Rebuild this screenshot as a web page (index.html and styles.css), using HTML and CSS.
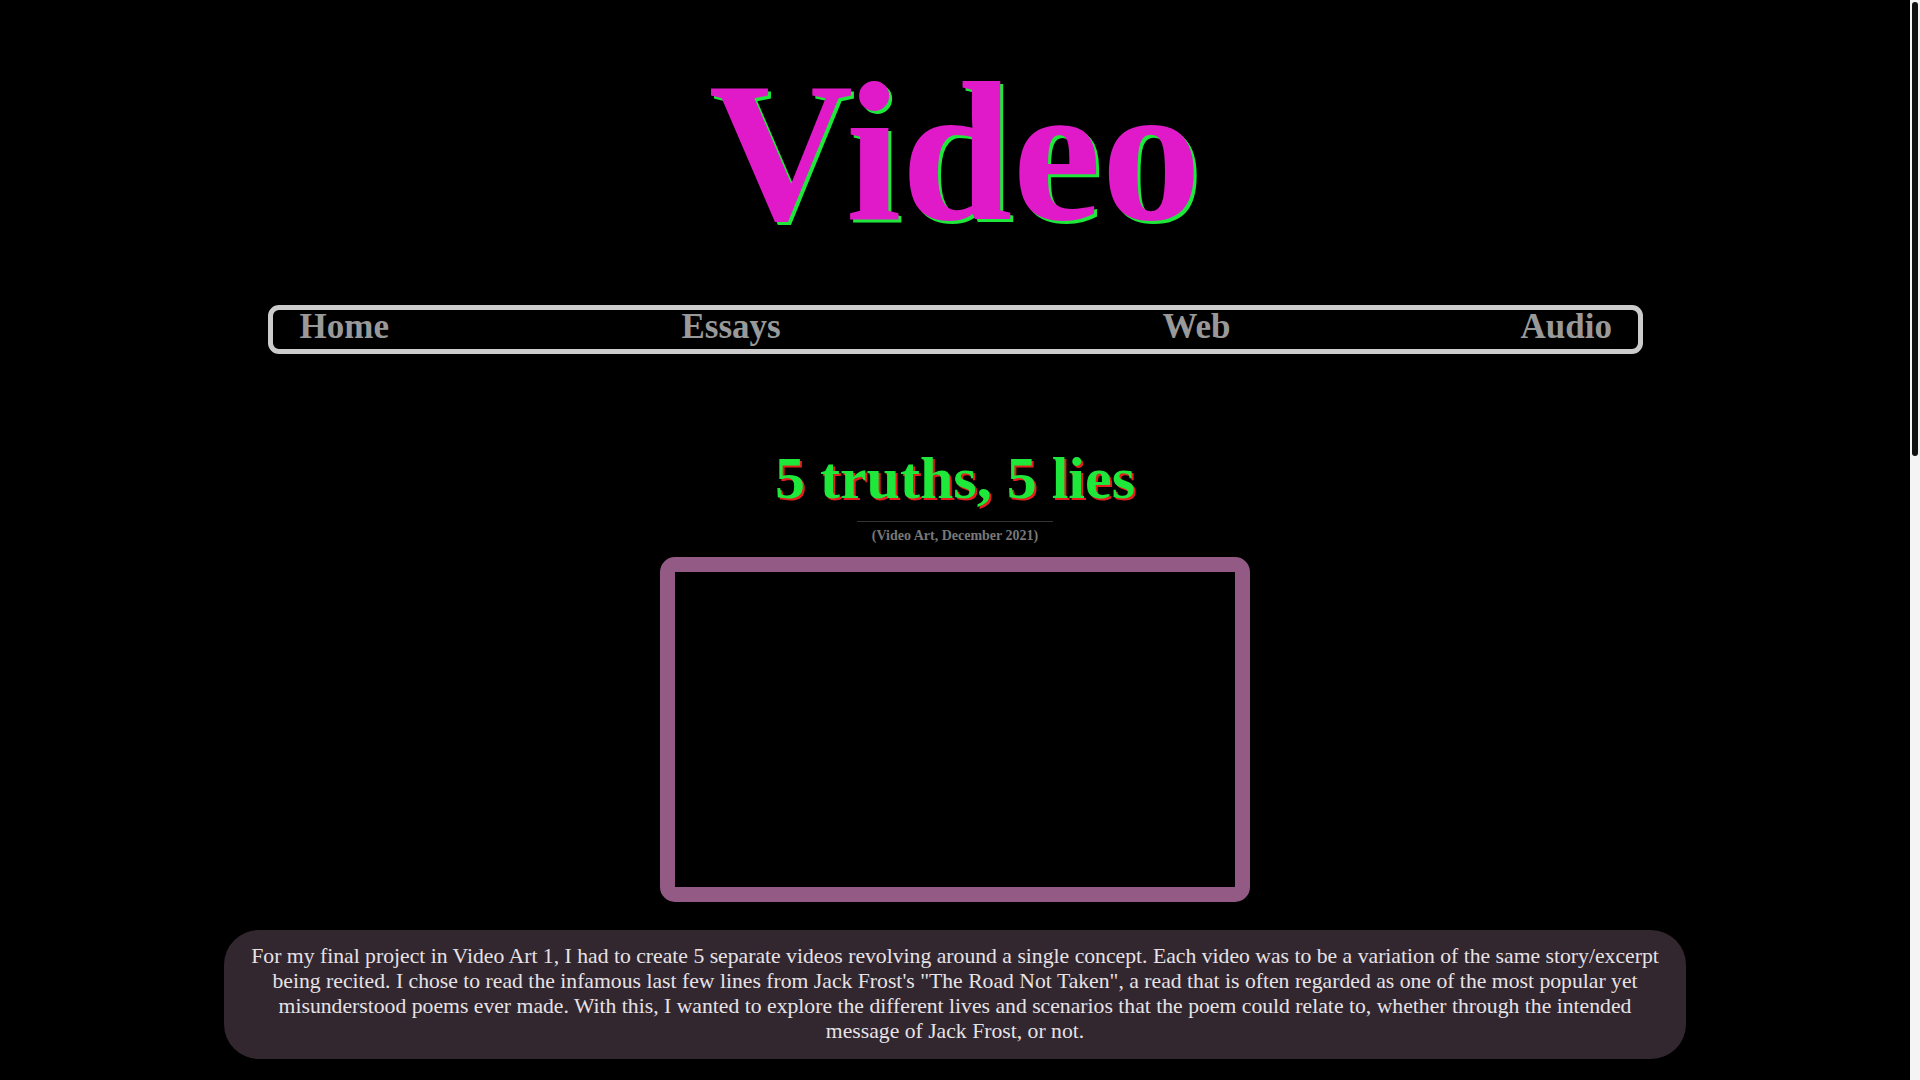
FILE: index.html
```html
<!DOCTYPE html>
<html lang="en">
<head>
<meta charset="utf-8">
<title>Video</title>
<link rel="stylesheet" href="styles.css">
</head>
<body>
<div class="page">
  <h1 class="site-title">Video</h1>
  <nav class="nav">
    <a class="nav-link" href="#">Home</a>
    <a class="nav-link" href="#">Essays</a>
    <a class="nav-link" href="#">Web</a>
    <a class="nav-link" href="#">Audio</a>
  </nav>
  <section class="project">
    <h2 class="project-title">5 truths, 5 lies</h2>
    <hr class="divider">
    <p class="project-meta">(Video Art, December 2021)</p>
    <div class="video-frame"></div>
    <div class="description">
      <p>For my final project in Video Art 1, I had to create 5 separate videos revolving around a single concept. Each video was to be a variation of the same story/excerpt being recited. I chose to read the infamous last few lines from Jack Frost's "The Road Not Taken", a read that is often regarded as one of the most popular yet misunderstood poems ever made. With this, I wanted to explore the different lives and scenarios that the poem could relate to, whether through the intended message of Jack Frost, or not.</p>
    </div>
  </section>
</div>
<div class="scrollbar" aria-hidden="true"><div class="scrollbar-thumb"></div></div>
</body>
</html>
```

FILE: styles.css
```css
html {
  background: #000;
}

body {
  margin: 0;
  background: #000;
  font-family: "Liberation Serif", "Times New Roman", serif;
  min-height: 2558px;
}

::-webkit-scrollbar {
  width: 0;
  height: 0;
}

.scrollbar {
  position: fixed;
  top: 0;
  right: 0;
  width: 10px;
  height: 100vh;
  background: #f4f4f4;
}

.scrollbar-thumb {
  margin: 2px 2px 0;
  width: 6px;
  height: 454px;
  border-radius: 3px;
  background: #111;
}

.page {
  box-sizing: border-box;
  display: flex;
  flex-direction: column;
  align-items: center;
  padding: 37px 10px 0 0;
}

.site-title {
  margin: 0;
  font-size: 200px;
  font-weight: bold;
  color: #e01ac8;
  text-shadow: 3px 3px 0 #1ee83a;
  line-height: normal;
}

.nav {
  box-sizing: border-box;
  width: 1375px;
  margin-top: 39px;
  border: 5px solid #cccccc;
  border-radius: 11px;
  padding: 0 0 6px 27px;
  display: grid;
  grid-template-columns: 382px 481px 358px auto;
  line-height: 33px;
}

.nav-link {
  font-size: 35px;
  font-weight: bold;
  color: #999999;
  text-decoration: none;
}

.project {
  display: flex;
  flex-direction: column;
  align-items: center;
  margin-top: 90px;
}

.project-title {
  margin: 0;
  font-size: 60px;
  font-weight: bold;
  color: #1ee83a;
  text-shadow: 2px 2px 0 #e3201c;
  line-height: normal;
}

.divider {
  width: 196px;
  height: 1px;
  margin: 8px 0 0;
  border: 0;
  background: #333333;
}

.project-meta {
  margin: 6px 0 0;
  font-size: 14px;
  font-weight: bold;
  color: #787878;
}

.video-frame {
  width: 560px;
  height: 315px;
  margin-top: 13px;
  border: 15px solid #925a84;
  border-radius: 15px;
  background: #000;
}

.description {
  box-sizing: border-box;
  width: 1462px;
  margin-top: 28px;
  padding: 14px 20px 15px;
  background: #32262f;
  border-radius: 35px;
  text-align: center;
}

.description p {
  margin: 0;
  font-size: 21.7px;
  line-height: 25px;
  color: #e6e2e6;
}
```
